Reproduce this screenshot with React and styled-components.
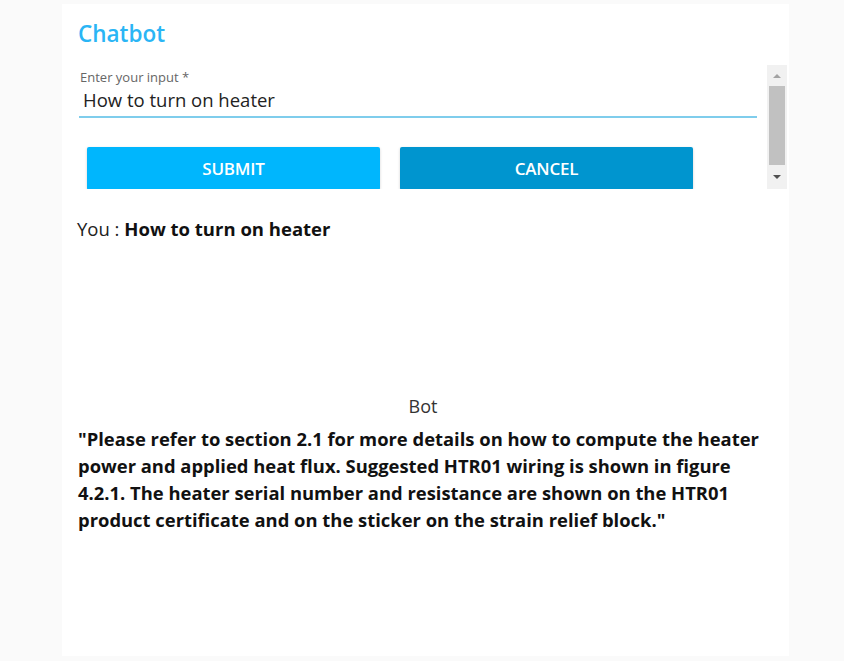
import React from "react";
import styled, { createGlobalStyle } from "styled-components";

const Global = createGlobalStyle`
  html, body { margin: 0; padding: 0; background: #fafafa; }
  body { font-family: "Open Sans", "Noto Sans", sans-serif; }
`;

const Panel = styled.main`
  box-sizing: border-box;
  margin: 4px 0 0 62px;
  width: 727px;
  height: 652px;
  background: #ffffff;
  padding: 14px 2px 0 17px;
  display: flex;
  flex-direction: column;
`;

const Title = styled.h1`
  margin: 0;
  font-size: 22.5px;
  line-height: 32px;
  font-weight: 600;
  color: #2ab5f5;
  margin-left: -1px;
`;

const ScrollArea = styled.section`
  margin-top: 15px;
  height: 124px;
  display: flex;
  align-items: stretch;
`;

const ScrollContent = styled.div`
  flex: 1;
  padding-top: 4px;
  margin-right: 10px;
  overflow: hidden;
`;

const Label = styled.label`
  display: block;
  font-size: 13px;
  line-height: 16px;
  color: #666;
  margin-left: 1px;
`;

const Field = styled.div`
  margin-top: 3px;
  font-size: 18.5px;
  line-height: 24px;
  color: #222;
  padding: 0 0 4px 4px;
  border-bottom: 2px solid #7fcdec;
`;

const Buttons = styled.div`
  display: flex;
  gap: 20px;
  margin: 29px 0 0 8px;
`;

const Button = styled.button`
  width: 293px;
  height: 43px;
  border: none;
  border-radius: 2px;
  background: ${(p) => p.$bg};
  color: #fff;
  font-family: "Open Sans", "Noto Sans", sans-serif;
  font-weight: 600;
  font-size: 17px;
  letter-spacing: -0.2px;
  box-shadow: 0 1px 3px rgba(0, 0, 0, 0.18);
  padding: 0;
`;

const ScrollBar = styled.div`
  width: 20px;
  background: #f1f1f1;
  display: flex;
  flex-direction: column;
`;

const ScrollBtn = styled.div`
  height: ${(p) => p.$h}px;
  display: flex;
  align-items: center;
  justify-content: center;
`;

const Arrow = styled.span`
  width: 0;
  height: 0;
  border-left: 4px solid transparent;
  border-right: 4px solid transparent;
  ${(p) =>
    p.$up
      ? `border-bottom: 4px solid #a3a3a3;`
      : `border-top: 4px solid #505050;`}
`;

const Thumb = styled.div`
  flex: 1;
  margin: 0 2px;
  background: #c1c1c1;
`;

const YouLine = styled.p`
  margin: 28px 0 0 -2px;
  font-size: 18.5px;
  line-height: 24px;
  color: #222;
  b { color: #111; font-weight: 700; }
`;

const BotLabel = styled.div`
  margin-top: 153px;
  text-align: center;
  font-size: 18px;
  line-height: 24px;
  color: #333;
  padding-right: 20px;
`;

const Reply = styled.p`
  margin: 7px 0 0 -1px;
  width: 700px;
  font-size: 18.4px;
  line-height: 27px;
  font-weight: 700;
  color: #111;
`;

export default function App() {
  return (
    <>
      <Global />
      <Panel>
        <Title>Chatbot</Title>
        <ScrollArea>
          <ScrollContent>
            <Label>Enter your input *</Label>
            <Field>How to turn on heater</Field>
            <Buttons>
              <Button $bg="#00b6fd">SUBMIT</Button>
              <Button $bg="#0095cf">CANCEL</Button>
            </Buttons>
          </ScrollContent>
          <ScrollBar>
            <ScrollBtn $h={21}>
              <Arrow $up />
            </ScrollBtn>
            <Thumb />
            <ScrollBtn $h={24}>
              <Arrow />
            </ScrollBtn>
          </ScrollBar>
        </ScrollArea>
        <YouLine>
          You : <b>How to turn on heater</b>
        </YouLine>
        <BotLabel>Bot</BotLabel>
        <Reply>
          "Please refer to section 2.1 for more details on how to compute the heater power and
          applied heat flux. Suggested HTR01 wiring is shown in figure 4.2.1. The heater serial
          number and resistance are shown on the HTR01 product certificate and on the sticker on
          the strain relief block."
        </Reply>
      </Panel>
    </>
  );
}
